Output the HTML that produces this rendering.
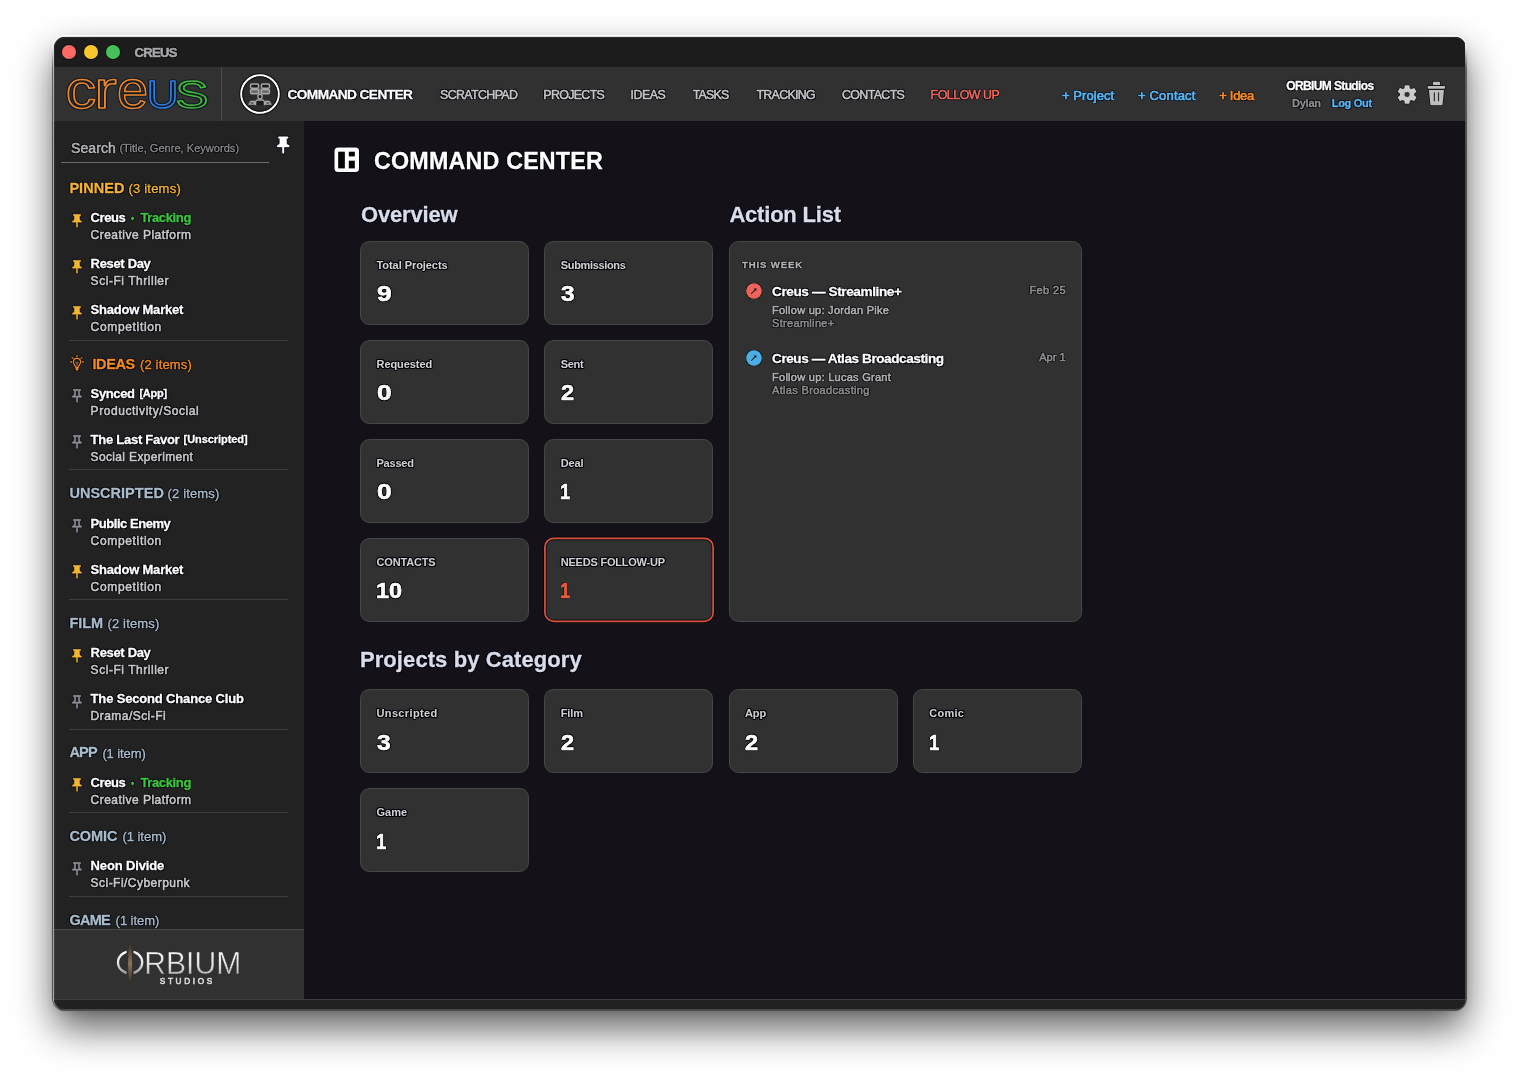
<!DOCTYPE html>
<html lang="en">
<head>
<meta charset="utf-8">
<title>CREUS — Command Center</title>
<style>
html,body{margin:0;padding:0}
body{width:1519px;height:1080px;background:#fff;position:relative;overflow:hidden;font-family:"Liberation Sans",sans-serif}
#win{position:absolute;left:53.5px;top:36.5px;width:1412px;height:973px;border-radius:11px;overflow:hidden;background:#141119;
 box-shadow:0 18px 38px rgba(0,0,0,.64),0 2px 8px rgba(0,0,0,.12)}
#ring{position:absolute;left:52.2px;top:35.2px;width:1414.6px;height:975.6px;border-radius:12.3px;padding:1.3px;box-sizing:border-box;background:linear-gradient(rgba(255,255,255,.96) 0,rgba(255,255,255,.9) 10px,rgba(96,96,96,.95) 34px,rgba(74,74,74,.95) 120px,rgba(74,74,74,.95) 100%);-webkit-mask:linear-gradient(#000 0 0) content-box,linear-gradient(#000 0 0);-webkit-mask-composite:xor;mask-composite:exclude;z-index:2}
#o{position:absolute;left:-53.5px;top:-36.5px;width:1519px;height:1080px;will-change:transform}
#o div,#o svg{position:absolute}
.t{position:absolute;white-space:pre;line-height:1;transform-origin:0 50%;color:#fff;text-shadow:.9px 0 .3px rgba(0,0,10,1),-.9px 0 .3px rgba(0,0,10,1),0 .9px .3px rgba(0,0,10,1),0 -.9px .3px rgba(0,0,10,1),.65px .65px .3px rgba(0,0,10,1),-.65px .65px .3px rgba(0,0,10,1),.65px -.65px .3px rgba(0,0,10,1),-.65px -.65px .3px rgba(0,0,10,1),0 0 2.5px rgba(0,0,10,0.55)}
.t.s2{text-shadow:.9px 0 .3px rgba(0,0,10,0.62),-.9px 0 .3px rgba(0,0,10,0.62),0 .9px .3px rgba(0,0,10,0.62),0 -.9px .3px rgba(0,0,10,0.62),.65px .65px .3px rgba(0,0,10,0.62),-.65px .65px .3px rgba(0,0,10,0.62),.65px -.65px .3px rgba(0,0,10,0.62),-.65px -.65px .3px rgba(0,0,10,0.62),0 0 2.5px rgba(0,0,10,0.3)}
.t.s3{text-shadow:.9px 0 .3px rgba(0,0,10,0.34),-.9px 0 .3px rgba(0,0,10,0.34),0 .9px .3px rgba(0,0,10,0.34),0 -.9px .3px rgba(0,0,10,0.34),.65px .65px .3px rgba(0,0,10,0.34),-.65px .65px .3px rgba(0,0,10,0.34),.65px -.65px .3px rgba(0,0,10,0.34),-.65px -.65px .3px rgba(0,0,10,0.34),0 0 2.5px rgba(0,0,10,0.15)}
#titlebar{left:53px;top:36px;width:1413px;height:30.5px;background:#1c1c1c}
#navbar{left:53px;top:66.5px;width:1413px;height:54.5px;background:#313131}
#sidebar{left:53px;top:121px;width:250.5px;height:808px;background:#222}
#footer{left:53px;top:929px;width:250.5px;height:69.5px;background:#313131;box-sizing:border-box;border-top:1px solid #474747}
#main{left:303.5px;top:121px;width:1163px;height:877.5px;background:#141119}
#statusbar{left:53px;top:998.5px;width:1413px;height:12px;background:#212121;box-sizing:border-box;border-top:1px solid #3e3e3e}
#edge{left:53.5px;top:36.5px;width:1412px;height:973px;border-radius:11px;box-sizing:border-box;border:1px solid rgba(255,255,255,.07);pointer-events:none}
.dot{width:13.6px;height:13.6px;border-radius:50%;top:45px;box-shadow:0 0 0 .7px rgba(0,0,10,.7)}
.hr{left:69px;width:219px;height:1px;background:#3d3d3d}
.card{box-sizing:border-box;width:169px;height:84px;border-radius:9.5px;background:#313131;border:1px solid #474747}
</style>
</head>
<body>
<div id="ring"></div>
<div id="win"><div id="o">

<!-- ======= title bar ======= -->
<div id="titlebar"></div>
<div class="dot" style="left:62.3px;background:#fb6a63"></div>
<div class="dot" style="left:84.3px;background:#f8c62f"></div>
<div class="dot" style="left:106.4px;background:#48c05a"></div>
<span class="t s2 tb" style="left:134.60px;top:46.00px;font-size:13px;font-weight:700;letter-spacing:-0.671px;color:#a8a8a8;-webkit-text-stroke:0.55px #a8a8a8;">CREUS</span>

<!-- ======= nav bar ======= -->
<div id="navbar"></div>
<div style="left:220.5px;top:66.5px;width:1.5px;height:54.5px;background:#4a4a4a"></div>
<svg style="left:64px;top:76px" width="148" height="36" viewBox="0 0 148 36" font-family="Liberation Sans, sans-serif" fill="none" stroke-linejoin="round"><g opacity=".8"><text x="1.7" y="31.7" font-size="52.6" textLength="30.4" lengthAdjust="spacingAndGlyphs" stroke="#0a1420" stroke-width="3.6">c</text><text x="30.2" y="31.7" font-size="52.6" textLength="22.6" lengthAdjust="spacingAndGlyphs" stroke="#0a1420" stroke-width="3.6">r</text><text x="53" y="31.7" font-size="52.6" textLength="31.2" lengthAdjust="spacingAndGlyphs" stroke="#0a1420" stroke-width="3.6">e</text><text x="82.8" y="31.7" font-size="38.2" textLength="31.6" lengthAdjust="spacingAndGlyphs" stroke="#0a1420" stroke-width="3.6">U</text><text x="111.4" y="31.7" font-size="38.2" textLength="32.8" lengthAdjust="spacingAndGlyphs" stroke="#0a1420" stroke-width="3.6">S</text></g><text x="1.7" y="31.7" font-size="52.6" textLength="30.4" lengthAdjust="spacingAndGlyphs" stroke="#f0862a" stroke-width="1.45">c</text><text x="30.2" y="31.7" font-size="52.6" textLength="22.6" lengthAdjust="spacingAndGlyphs" stroke="#f0862a" stroke-width="1.45">r</text><text x="53" y="31.7" font-size="52.6" textLength="31.2" lengthAdjust="spacingAndGlyphs" stroke="#f0862a" stroke-width="1.45">e</text><text x="82.8" y="31.7" font-size="38.2" textLength="31.6" lengthAdjust="spacingAndGlyphs" stroke="#2f7fe6" stroke-width="1.45">U</text><text x="111.4" y="31.7" font-size="38.2" textLength="32.8" lengthAdjust="spacingAndGlyphs" stroke="#3fbe3a" stroke-width="1.45">S</text></svg>
<svg style="left:238.4px;top:72.2px" width="44" height="44" viewBox="0 0 44 44" fill="none"><circle cx="22" cy="22" r="20.2" fill="#2b2b2b" stroke="#0a0a0a" stroke-width="1.2"/><circle cx="22" cy="22" r="18.75" stroke="#fff" stroke-width="2"/><circle cx="22" cy="22" r="17.2" stroke="#0a0a0a" stroke-width="1"/><g stroke="#a8a8a8" stroke-width="1.5" fill="#1c1c1c"><rect x="12.6" y="12" width="8" height="4.2" rx="1.2"/><rect x="23.4" y="12" width="8" height="4.2" rx="1.2"/><rect x="12.6" y="17.4" width="8" height="4.4" rx="1.2" fill="#6a6a6a"/><rect x="23.4" y="17.4" width="8" height="4.4" rx="1.2" fill="#6a6a6a"/><path d="M22 16.2v6" stroke-width="1"/><circle cx="22" cy="24.6" r="2.2" stroke-width="1.3"/><path d="M17.6 33.2v-3a2.2 2.2 0 0 1 2.2-2.2h4.4a2.2 2.2 0 0 1 2.2 2.2v3" stroke-width="1.3"/><path d="M10.6 32.4l2-3.4h4.4v3.4zM33.4 32.4l-2-3.400h-4.400v3.400z" fill="#a8a8a8" stroke-width=".6"/><path d="M12.600 31h3M28.400 31h3" stroke="#1c1c1c" stroke-width=".9"/></g></svg>
<span class="t nav" style="left:287.50px;top:87.65px;font-size:13.7px;font-weight:700;letter-spacing:-0.591px;-webkit-text-stroke:0.3px #fff;">COMMAND CENTER</span>
<span class="t nav" style="left:440.00px;top:88.70px;font-size:12.4px;letter-spacing:-0.620px;color:#c6c6c6;-webkit-text-stroke:0.54px #c6c6c6;">SCRATCHPAD</span>
<span class="t nav" style="left:543.30px;top:88.70px;font-size:12.4px;letter-spacing:-0.647px;color:#c6c6c6;-webkit-text-stroke:0.54px #c6c6c6;">PROJECTS</span>
<span class="t nav" style="left:630.60px;top:88.70px;font-size:12.4px;letter-spacing:-0.480px;color:#c6c6c6;-webkit-text-stroke:0.54px #c6c6c6;">IDEAS</span>
<span class="t nav" style="left:692.70px;top:88.70px;font-size:12.4px;letter-spacing:-0.785px;color:#c6c6c6;-webkit-text-stroke:0.54px #c6c6c6;">TASKS</span>
<span class="t nav" style="left:756.50px;top:88.70px;font-size:12.4px;letter-spacing:-0.698px;color:#c6c6c6;-webkit-text-stroke:0.54px #c6c6c6;">TRACKING</span>
<span class="t nav" style="left:842.00px;top:88.70px;font-size:12.4px;letter-spacing:-0.623px;color:#c6c6c6;-webkit-text-stroke:0.54px #c6c6c6;">CONTACTS</span>
<span class="t s2 nav" style="left:930.60px;top:88.70px;font-size:12.4px;letter-spacing:-0.489px;color:#ee6a5e;-webkit-text-stroke:0.54px #ee6a5e;">FOLLOW UP</span>
<span class="t s2 nav" style="left:1062.00px;top:88.50px;font-size:13px;letter-spacing:0.069px;color:#5cb6f2;-webkit-text-stroke:0.72px #5cb6f2;">+ Project</span>
<span class="t s2 nav" style="left:1138.00px;top:88.50px;font-size:13px;letter-spacing:0.170px;color:#5cb6f2;-webkit-text-stroke:0.72px #5cb6f2;">+ Contact</span>
<span class="t s2 nav" style="left:1219.25px;top:88.50px;font-size:13px;letter-spacing:-0.305px;color:#f28c28;-webkit-text-stroke:0.72px #f28c28;">+ Idea</span>
<span class="t nav" style="left:1286.25px;top:79.84px;font-size:12px;font-weight:700;letter-spacing:-0.621px;-webkit-text-stroke:0.3px #fff;">ORBIUM Studios</span>
<span class="t s2 nav" style="left:1292.00px;top:97.69px;font-size:11px;font-weight:700;letter-spacing:-0.246px;color:#8e8e8e;-webkit-text-stroke:0.3px #8e8e8e;">Dylan</span>
<span class="t s2 nav" style="left:1331.75px;top:97.69px;font-size:11px;font-weight:700;letter-spacing:-0.290px;color:#5cb6f2;-webkit-text-stroke:0.3px #5cb6f2;">Log Out</span>
<svg style="left:1394.9px;top:82.6px" width="24.2" height="23" viewBox="0 0 24 24" preserveAspectRatio="none"><path d="M19.14 12.94c.04-.3.06-.61.06-.94 0-.32-.02-.64-.07-.94l2.03-1.58a.49.49 0 0 0 .12-.61l-1.92-3.32a.488.488 0 0 0-.59-.22l-2.39.96c-.5-.38-1.03-.7-1.62-.94l-.36-2.54a.484.484 0 0 0-.48-.41h-3.84c-.24 0-.43.17-.47.41l-.36 2.54c-.59.24-1.13.57-1.62.94l-2.39-.96c-.22-.08-.47 0-.59.22L2.74 8.87c-.12.21-.08.47.12.61l2.03 1.58c-.05.3-.09.63-.09.94s.02.64.07.94l-2.03 1.58a.49.49 0 0 0-.12.61l1.92 3.32c.12.22.37.29.59.22l2.39-.96c.5.38 1.03.7 1.62.94l.36 2.54c.05.24.24.41.48.41h3.84c.24 0 .44-.17.47-.41l.36-2.54c.59-.24 1.13-.56 1.62-.94l2.39.96c.22.08.47 0 .59-.22l1.92-3.32c.12-.22.07-.47-.12-.61l-2.01-1.58zM12 15.6c-1.98 0-3.6-1.62-3.6-3.6s1.620-3.6 3.6-3.6 3.600 1.620 3.6 3.6-1.620 3.6-3.6 3.6z" fill="#cbcbcb" stroke="#0c0c0c" stroke-width="1.4" paint-order="stroke" stroke-linejoin="round"/><circle cx="12" cy="12" r="3.300" fill="none" stroke="#cbcbcb" stroke-width="1.5"/></svg><svg style="left:1426px;top:80px" width="21" height="27" viewBox="0 0 21 27"><g stroke="#0c0c0c" stroke-width="1.4" stroke-linejoin="round" fill="#bdbdbd" paint-order="stroke"><rect x="6.9" y="1.8" width="7.2" height="3.4" rx="1"/><rect x="1.6" y="6" width="17.6" height="2.8" rx="1.1"/><path d="M2.9 10.1h15.1l-1.45 14.4a.9.9 0 0 1-.9.8H5.25a.9.9 0 0 1-.9-.8z"/></g><rect x="7.8" y="12.4" width="1.15" height="8.8" fill="#2a2a2a"/><rect x="11.95" y="12.4" width="1.15" height="8.8" fill="#2a2a2a"/></svg>

<!-- ======= sidebar ======= -->
<div id="sidebar"></div>
<div style="left:61.4px;top:162.3px;width:207.4px;height:1.2px;background:#6c6c6c"></div>
<svg class="pin" style="left:273.3px;top:135.2px" width="20.4" height="20.4" viewBox="0 0 24 24"><path d="M16 9V4h1c.55 0 1-.45 1-1s-.45-1-1-1H7c-.55 0-1 .45-1 1s.45 1 1 1h1v5c0 1.66-1.34 3-3 3v2h5.97v7l1 1 1-1v-7H19v-2c-1.66 0-3-1.34-3-3z" fill="#05051a" stroke="#05051a" stroke-width="2.6" stroke-linejoin="round"/><path d="M16 9V4h1c.55 0 1-.45 1-1s-.45-1-1-1H7c-.55 0-1 .45-1 1s.45 1 1 1h1v5c0 1.66-1.34 3-3 3v2h5.97v7l1 1 1-1v-7H19v-2c-1.66 0-3-1.34-3-3z" fill="#fff" stroke="#fff" stroke-width="0.5" stroke-linejoin="round"/></svg>
<svg class="pin" style="left:69px;top:212.7px" width="16" height="16" viewBox="0 0 24 24"><path d="M16 9V4h1c.55 0 1-.45 1-1s-.45-1-1-1H7c-.55 0-1 .45-1 1s.45 1 1 1h1v5c0 1.66-1.34 3-3 3v2h5.97v7l1 1 1-1v-7H19v-2c-1.66 0-3-1.34-3-3z" fill="#05051a" stroke="#05051a" stroke-width="2.6" stroke-linejoin="round"/><path d="M16 9V4h1c.55 0 1-.45 1-1s-.45-1-1-1H7c-.55 0-1 .45-1 1s.45 1 1 1h1v5c0 1.66-1.34 3-3 3v2h5.97v7l1 1 1-1v-7H19v-2c-1.66 0-3-1.34-3-3z" fill="#f2b432" stroke="#f2b432" stroke-width="0.5" stroke-linejoin="round"/></svg>
<svg class="pin" style="left:69px;top:258.7px" width="16" height="16" viewBox="0 0 24 24"><path d="M16 9V4h1c.55 0 1-.45 1-1s-.45-1-1-1H7c-.55 0-1 .45-1 1s.45 1 1 1h1v5c0 1.66-1.34 3-3 3v2h5.97v7l1 1 1-1v-7H19v-2c-1.66 0-3-1.34-3-3z" fill="#05051a" stroke="#05051a" stroke-width="2.6" stroke-linejoin="round"/><path d="M16 9V4h1c.55 0 1-.45 1-1s-.45-1-1-1H7c-.55 0-1 .45-1 1s.45 1 1 1h1v5c0 1.66-1.34 3-3 3v2h5.97v7l1 1 1-1v-7H19v-2c-1.66 0-3-1.34-3-3z" fill="#f2b432" stroke="#f2b432" stroke-width="0.5" stroke-linejoin="round"/></svg>
<svg class="pin" style="left:69px;top:304.6px" width="16" height="16" viewBox="0 0 24 24"><path d="M16 9V4h1c.55 0 1-.45 1-1s-.45-1-1-1H7c-.55 0-1 .45-1 1s.45 1 1 1h1v5c0 1.66-1.34 3-3 3v2h5.97v7l1 1 1-1v-7H19v-2c-1.66 0-3-1.34-3-3z" fill="#05051a" stroke="#05051a" stroke-width="2.6" stroke-linejoin="round"/><path d="M16 9V4h1c.55 0 1-.45 1-1s-.45-1-1-1H7c-.55 0-1 .45-1 1s.45 1 1 1h1v5c0 1.66-1.34 3-3 3v2h5.97v7l1 1 1-1v-7H19v-2c-1.66 0-3-1.34-3-3z" fill="#f2b432" stroke="#f2b432" stroke-width="0.5" stroke-linejoin="round"/></svg>
<svg class="pin" style="left:69px;top:388.2px" width="16" height="16" viewBox="0 0 24 24"><path d="M14 4v5c0 1.12.37 2.16 1 3H9c.65-.86 1-1.9 1-3V4h4m3-2H7c-.55 0-1 .45-1 1s.45 1 1 1h1v5c0 1.66-1.34 3-3 3v2h5.97v7l1 1 1-1v-7H19v-2c-1.66 0-3-1.34-3-3V4h1c.55 0 1-.45 1-1s-.45-1-1-1z" fill="#05051a" stroke="#05051a" stroke-width="2.6" stroke-linejoin="round"/><path d="M14 4v5c0 1.12.37 2.16 1 3H9c.65-.86 1-1.9 1-3V4h4m3-2H7c-.55 0-1 .45-1 1s.45 1 1 1h1v5c0 1.66-1.34 3-3 3v2h5.97v7l1 1 1-1v-7H19v-2c-1.66 0-3-1.34-3-3V4h1c.55 0 1-.45 1-1s-.45-1-1-1z" fill="#8e8e8e" stroke="#8e8e8e" stroke-width="0.9" stroke-linejoin="round"/></svg>
<svg class="pin" style="left:69px;top:434.2px" width="16" height="16" viewBox="0 0 24 24"><path d="M14 4v5c0 1.12.37 2.16 1 3H9c.65-.86 1-1.9 1-3V4h4m3-2H7c-.55 0-1 .45-1 1s.45 1 1 1h1v5c0 1.66-1.34 3-3 3v2h5.97v7l1 1 1-1v-7H19v-2c-1.66 0-3-1.34-3-3V4h1c.55 0 1-.45 1-1s-.45-1-1-1z" fill="#05051a" stroke="#05051a" stroke-width="2.6" stroke-linejoin="round"/><path d="M14 4v5c0 1.12.37 2.16 1 3H9c.65-.86 1-1.9 1-3V4h4m3-2H7c-.55 0-1 .45-1 1s.45 1 1 1h1v5c0 1.66-1.34 3-3 3v2h5.97v7l1 1 1-1v-7H19v-2c-1.66 0-3-1.34-3-3V4h1c.55 0 1-.45 1-1s-.45-1-1-1z" fill="#8e8e8e" stroke="#8e8e8e" stroke-width="0.9" stroke-linejoin="round"/></svg>
<svg class="pin" style="left:69px;top:518.1px" width="16" height="16" viewBox="0 0 24 24"><path d="M14 4v5c0 1.12.37 2.16 1 3H9c.65-.86 1-1.9 1-3V4h4m3-2H7c-.55 0-1 .45-1 1s.45 1 1 1h1v5c0 1.66-1.34 3-3 3v2h5.97v7l1 1 1-1v-7H19v-2c-1.66 0-3-1.34-3-3V4h1c.55 0 1-.45 1-1s-.45-1-1-1z" fill="#05051a" stroke="#05051a" stroke-width="2.6" stroke-linejoin="round"/><path d="M14 4v5c0 1.12.37 2.16 1 3H9c.65-.86 1-1.9 1-3V4h4m3-2H7c-.55 0-1 .45-1 1s.45 1 1 1h1v5c0 1.66-1.34 3-3 3v2h5.97v7l1 1 1-1v-7H19v-2c-1.66 0-3-1.34-3-3V4h1c.55 0 1-.45 1-1s-.45-1-1-1z" fill="#8e8e8e" stroke="#8e8e8e" stroke-width="0.9" stroke-linejoin="round"/></svg>
<svg class="pin" style="left:69px;top:564.1px" width="16" height="16" viewBox="0 0 24 24"><path d="M16 9V4h1c.55 0 1-.45 1-1s-.45-1-1-1H7c-.55 0-1 .45-1 1s.45 1 1 1h1v5c0 1.66-1.34 3-3 3v2h5.97v7l1 1 1-1v-7H19v-2c-1.66 0-3-1.34-3-3z" fill="#05051a" stroke="#05051a" stroke-width="2.6" stroke-linejoin="round"/><path d="M16 9V4h1c.55 0 1-.45 1-1s-.45-1-1-1H7c-.55 0-1 .45-1 1s.45 1 1 1h1v5c0 1.66-1.34 3-3 3v2h5.97v7l1 1 1-1v-7H19v-2c-1.66 0-3-1.34-3-3z" fill="#f2b432" stroke="#f2b432" stroke-width="0.5" stroke-linejoin="round"/></svg>
<svg class="pin" style="left:69px;top:647.7px" width="16" height="16" viewBox="0 0 24 24"><path d="M16 9V4h1c.55 0 1-.45 1-1s-.45-1-1-1H7c-.55 0-1 .45-1 1s.45 1 1 1h1v5c0 1.66-1.34 3-3 3v2h5.97v7l1 1 1-1v-7H19v-2c-1.66 0-3-1.34-3-3z" fill="#05051a" stroke="#05051a" stroke-width="2.6" stroke-linejoin="round"/><path d="M16 9V4h1c.55 0 1-.45 1-1s-.45-1-1-1H7c-.55 0-1 .45-1 1s.45 1 1 1h1v5c0 1.66-1.34 3-3 3v2h5.97v7l1 1 1-1v-7H19v-2c-1.66 0-3-1.34-3-3z" fill="#f2b432" stroke="#f2b432" stroke-width="0.5" stroke-linejoin="round"/></svg>
<svg class="pin" style="left:69px;top:693.7px" width="16" height="16" viewBox="0 0 24 24"><path d="M14 4v5c0 1.12.37 2.16 1 3H9c.65-.86 1-1.9 1-3V4h4m3-2H7c-.55 0-1 .45-1 1s.45 1 1 1h1v5c0 1.66-1.34 3-3 3v2h5.97v7l1 1 1-1v-7H19v-2c-1.66 0-3-1.34-3-3V4h1c.55 0 1-.45 1-1s-.45-1-1-1z" fill="#05051a" stroke="#05051a" stroke-width="2.6" stroke-linejoin="round"/><path d="M14 4v5c0 1.12.37 2.16 1 3H9c.65-.86 1-1.9 1-3V4h4m3-2H7c-.55 0-1 .45-1 1s.45 1 1 1h1v5c0 1.66-1.34 3-3 3v2h5.97v7l1 1 1-1v-7H19v-2c-1.66 0-3-1.34-3-3V4h1c.55 0 1-.45 1-1s-.45-1-1-1z" fill="#8e8e8e" stroke="#8e8e8e" stroke-width="0.9" stroke-linejoin="round"/></svg>
<svg class="pin" style="left:69px;top:777.2px" width="16" height="16" viewBox="0 0 24 24"><path d="M16 9V4h1c.55 0 1-.45 1-1s-.45-1-1-1H7c-.55 0-1 .45-1 1s.45 1 1 1h1v5c0 1.66-1.34 3-3 3v2h5.97v7l1 1 1-1v-7H19v-2c-1.66 0-3-1.34-3-3z" fill="#05051a" stroke="#05051a" stroke-width="2.6" stroke-linejoin="round"/><path d="M16 9V4h1c.55 0 1-.45 1-1s-.45-1-1-1H7c-.55 0-1 .45-1 1s.45 1 1 1h1v5c0 1.66-1.34 3-3 3v2h5.97v7l1 1 1-1v-7H19v-2c-1.66 0-3-1.34-3-3z" fill="#f2b432" stroke="#f2b432" stroke-width="0.5" stroke-linejoin="round"/></svg>
<svg class="pin" style="left:69px;top:860.8px" width="16" height="16" viewBox="0 0 24 24"><path d="M14 4v5c0 1.12.37 2.16 1 3H9c.65-.86 1-1.9 1-3V4h4m3-2H7c-.55 0-1 .45-1 1s.45 1 1 1h1v5c0 1.66-1.34 3-3 3v2h5.97v7l1 1 1-1v-7H19v-2c-1.66 0-3-1.34-3-3V4h1c.55 0 1-.45 1-1s-.45-1-1-1z" fill="#05051a" stroke="#05051a" stroke-width="2.6" stroke-linejoin="round"/><path d="M14 4v5c0 1.12.37 2.16 1 3H9c.65-.86 1-1.9 1-3V4h4m3-2H7c-.55 0-1 .45-1 1s.45 1 1 1h1v5c0 1.66-1.34 3-3 3v2h5.97v7l1 1 1-1v-7H19v-2c-1.66 0-3-1.34-3-3V4h1c.55 0 1-.45 1-1s-.45-1-1-1z" fill="#8e8e8e" stroke="#8e8e8e" stroke-width="0.9" stroke-linejoin="round"/></svg>
<svg style="left:68.7px;top:354.2px" width="16" height="18" viewBox="0 0 16 18" fill="none" stroke="#f28a22" stroke-width="1.15" stroke-linecap="round"><g stroke="#05051a" stroke-width="2.6" opacity=".9"><path d="M8 1.3v1.5M1.3 7.9h1.6M13.1 7.9h1.6M2.9 3.3l1.2 1.1M13.1 3.3l-1.2 1.1"/><circle cx="8" cy="7.9" r="3.5"/><path d="M6.7 12.6h2.6v3.2H6.7z" fill="#05051a"/></g><path d="M8 1.3v1.5M1.3 7.9h1.6M13.1 7.9h1.6M2.9 3.3l1.2 1.1M13.1 3.3l-1.2 1.1"/><path d="M6.6 13.1 C6.6 11.4 4.5 10.6 4.5 7.9 a3.5 3.5 0 0 1 7 0 C11.5 10.6 9.4 11.4 9.4 13.1"/><path d="M6.6 12.9h2.8v2.4a1.4 1.4 0 0 1-2.8 0z" fill="#f28a22" stroke="none"/><path d="M8 9.6v2.8M6.8 8.3L8 9.6l1.2-1.3" stroke-width=".8"/></svg>
<div class="hr" style="top:339.6px"></div>
<div class="hr" style="top:469.2px"></div>
<div class="hr" style="top:599.2px"></div>
<div class="hr" style="top:728.8px"></div>
<div class="hr" style="top:812.3px"></div>
<div class="hr" style="top:895.5px"></div>
<span class="t s2 sb" style="left:71.00px;top:140.75px;font-size:14px;letter-spacing:0.086px;color:#b2b2b2;-webkit-text-stroke:0.57px #b2b2b2;">Search</span>
<span class="t s2 sb" style="left:119.40px;top:143.09px;font-size:11px;letter-spacing:0.038px;color:#8c8c8c;-webkit-text-stroke:0.32px #8c8c8c;">(Title, Genre, Keywords)</span>
<span class="t s2 sb" style="left:69.40px;top:180.73px;font-size:14.5px;font-weight:700;letter-spacing:0.057px;color:#f2b432;-webkit-text-stroke:0.3px #f2b432;">PINNED</span>
<span class="t s2 sb" style="left:128.40px;top:182.00px;font-size:13px;letter-spacing:0.221px;color:#f2b432;-webkit-text-stroke:0.37px #f2b432;">(3 items)</span>
<span class="t sb" style="left:90.60px;top:211.10px;font-size:13px;font-weight:700;letter-spacing:-0.405px;-webkit-text-stroke:0.3px #fff;">Creus</span>
<span class="t s2 sb" style="left:131.00px;top:213.21px;font-size:10.5px;font-weight:700;transform:scaleX(0.875);color:#3fc43f;-webkit-text-stroke:0.3px #3fc43f;">•</span>
<span class="t s2 sb" style="left:140.40px;top:211.10px;font-size:13px;font-weight:700;letter-spacing:-0.361px;color:#3fc43f;-webkit-text-stroke:0.3px #3fc43f;">Tracking</span>
<span class="t sb" style="left:90.60px;top:229.34px;font-size:12px;letter-spacing:0.481px;color:#c8c8c8;-webkit-text-stroke:0.57px #c8c8c8;">Creative Platform</span>
<span class="t sb" style="left:90.60px;top:257.10px;font-size:13px;font-weight:700;letter-spacing:-0.330px;-webkit-text-stroke:0.3px #fff;">Reset Day</span>
<span class="t sb" style="left:90.60px;top:275.34px;font-size:12px;letter-spacing:0.538px;color:#c8c8c8;-webkit-text-stroke:0.57px #c8c8c8;">Sci-Fi Thriller</span>
<span class="t sb" style="left:90.60px;top:303.00px;font-size:13px;font-weight:700;letter-spacing:-0.219px;-webkit-text-stroke:0.3px #fff;">Shadow Market</span>
<span class="t sb" style="left:90.60px;top:321.24px;font-size:12px;letter-spacing:0.664px;color:#c8c8c8;-webkit-text-stroke:0.57px #c8c8c8;">Competition</span>
<span class="t s2 sb" style="left:92.40px;top:356.73px;font-size:14.5px;font-weight:700;letter-spacing:-0.361px;color:#f28a22;-webkit-text-stroke:0.3px #f28a22;">IDEAS</span>
<span class="t s2 sb" style="left:140.00px;top:358.00px;font-size:13px;letter-spacing:0.146px;color:#f28a22;-webkit-text-stroke:0.37px #f28a22;">(2 items)</span>
<span class="t sb" style="left:90.60px;top:386.60px;font-size:13px;font-weight:700;letter-spacing:-0.380px;-webkit-text-stroke:0.3px #fff;">Synced</span>
<span class="t sb" style="left:139.40px;top:388.29px;font-size:11px;font-weight:700;letter-spacing:-0.261px;-webkit-text-stroke:0.3px #fff;">[App]</span>
<span class="t sb" style="left:90.60px;top:404.84px;font-size:12px;letter-spacing:0.557px;color:#c8c8c8;-webkit-text-stroke:0.57px #c8c8c8;">Productivity/Social</span>
<span class="t sb" style="left:90.60px;top:432.60px;font-size:13px;font-weight:700;letter-spacing:-0.262px;-webkit-text-stroke:0.3px #fff;">The Last Favor</span>
<span class="t sb" style="left:183.60px;top:434.29px;font-size:11px;font-weight:700;letter-spacing:-0.065px;-webkit-text-stroke:0.3px #fff;">[Unscripted]</span>
<span class="t sb" style="left:90.60px;top:450.84px;font-size:12px;letter-spacing:0.352px;color:#c8c8c8;-webkit-text-stroke:0.57px #c8c8c8;">Social Experiment</span>
<span class="t s2 sb" style="left:69.40px;top:486.03px;font-size:14.5px;font-weight:700;letter-spacing:0.024px;color:#a9bcc9;-webkit-text-stroke:0.3px #a9bcc9;">UNSCRIPTED</span>
<span class="t s2 sb" style="left:167.60px;top:487.30px;font-size:13px;letter-spacing:0.146px;color:#a9bcc9;-webkit-text-stroke:0.37px #a9bcc9;">(2 items)</span>
<span class="t sb" style="left:90.60px;top:516.50px;font-size:13px;font-weight:700;letter-spacing:-0.456px;-webkit-text-stroke:0.3px #fff;">Public Enemy</span>
<span class="t sb" style="left:90.60px;top:534.74px;font-size:12px;letter-spacing:0.664px;color:#c8c8c8;-webkit-text-stroke:0.57px #c8c8c8;">Competition</span>
<span class="t sb" style="left:90.60px;top:562.50px;font-size:13px;font-weight:700;letter-spacing:-0.219px;-webkit-text-stroke:0.3px #fff;">Shadow Market</span>
<span class="t sb" style="left:90.60px;top:580.74px;font-size:12px;letter-spacing:0.664px;color:#c8c8c8;-webkit-text-stroke:0.57px #c8c8c8;">Competition</span>
<span class="t s2 sb" style="left:69.40px;top:615.83px;font-size:14.5px;font-weight:700;letter-spacing:-0.048px;color:#a9bcc9;-webkit-text-stroke:0.3px #a9bcc9;">FILM</span>
<span class="t s2 sb" style="left:107.40px;top:617.10px;font-size:13px;letter-spacing:0.171px;color:#a9bcc9;-webkit-text-stroke:0.37px #a9bcc9;">(2 items)</span>
<span class="t sb" style="left:90.60px;top:646.10px;font-size:13px;font-weight:700;letter-spacing:-0.330px;-webkit-text-stroke:0.3px #fff;">Reset Day</span>
<span class="t sb" style="left:90.60px;top:664.34px;font-size:12px;letter-spacing:0.538px;color:#c8c8c8;-webkit-text-stroke:0.57px #c8c8c8;">Sci-Fi Thriller</span>
<span class="t sb" style="left:90.60px;top:692.10px;font-size:13px;font-weight:700;letter-spacing:-0.162px;-webkit-text-stroke:0.3px #fff;">The Second Chance Club</span>
<span class="t sb" style="left:90.60px;top:710.34px;font-size:12px;letter-spacing:0.460px;color:#c8c8c8;-webkit-text-stroke:0.57px #c8c8c8;">Drama/Sci-Fi</span>
<span class="t s2 sb" style="left:69.40px;top:745.43px;font-size:14.5px;font-weight:700;letter-spacing:-0.771px;color:#a9bcc9;-webkit-text-stroke:0.3px #a9bcc9;">APP</span>
<span class="t s2 sb" style="left:102.40px;top:746.70px;font-size:13px;letter-spacing:-0.104px;color:#a9bcc9;-webkit-text-stroke:0.37px #a9bcc9;">(1 item)</span>
<span class="t sb" style="left:90.60px;top:775.60px;font-size:13px;font-weight:700;letter-spacing:-0.405px;-webkit-text-stroke:0.3px #fff;">Creus</span>
<span class="t s2 sb" style="left:131.00px;top:777.71px;font-size:10.5px;font-weight:700;transform:scaleX(0.875);color:#3fc43f;-webkit-text-stroke:0.3px #3fc43f;">•</span>
<span class="t s2 sb" style="left:140.40px;top:775.60px;font-size:13px;font-weight:700;letter-spacing:-0.361px;color:#3fc43f;-webkit-text-stroke:0.3px #3fc43f;">Tracking</span>
<span class="t sb" style="left:90.60px;top:793.84px;font-size:12px;letter-spacing:0.481px;color:#c8c8c8;-webkit-text-stroke:0.57px #c8c8c8;">Creative Platform</span>
<span class="t s2 sb" style="left:69.40px;top:829.03px;font-size:14.5px;font-weight:700;letter-spacing:-0.064px;color:#a9bcc9;-webkit-text-stroke:0.3px #a9bcc9;">COMIC</span>
<span class="t s2 sb" style="left:122.40px;top:830.30px;font-size:13px;letter-spacing:-0.019px;color:#a9bcc9;-webkit-text-stroke:0.37px #a9bcc9;">(1 item)</span>
<span class="t sb" style="left:90.60px;top:859.20px;font-size:13px;font-weight:700;letter-spacing:-0.149px;-webkit-text-stroke:0.3px #fff;">Neon Divide</span>
<span class="t sb" style="left:90.60px;top:877.44px;font-size:12px;letter-spacing:0.465px;color:#c8c8c8;-webkit-text-stroke:0.57px #c8c8c8;">Sci-Fi/Cyberpunk</span>
<span class="t s2 sb" style="left:69.40px;top:912.73px;font-size:14.5px;font-weight:700;letter-spacing:-0.743px;color:#a9bcc9;-webkit-text-stroke:0.3px #a9bcc9;">GAME</span>
<span class="t s2 sb" style="left:115.60px;top:914.00px;font-size:13px;letter-spacing:-0.047px;color:#a9bcc9;-webkit-text-stroke:0.37px #a9bcc9;">(1 item)</span>
<div id="footer"></div>
<svg style="left:110px;top:940px" width="140" height="46" viewBox="0 0 140 46" font-family="Liberation Sans, sans-serif"><defs><linearGradient id="og" x1="0" y1="0" x2="0" y2="1"><stop offset="0" stop-color="#fff"/><stop offset=".55" stop-color="#e4e4e4"/><stop offset="1" stop-color="#9a9a9a"/></linearGradient><linearGradient id="bz" x1="0" y1="0" x2="0" y2="1"><stop offset="0" stop-color="#3a332a"/><stop offset=".5" stop-color="#8a7452"/><stop offset="1" stop-color="#3a332a"/></linearGradient></defs><ellipse cx="20.1" cy="22.4" rx="12.1" ry="11" fill="none" stroke="url(#og)" stroke-width="2.3"/><rect x="16.6" y="8" width="7" height="30" fill="#323232"/><ellipse cx="20.1" cy="23.2" rx="2" ry="19" fill="url(#bz)"/><text x="34.3" y="33.9" font-size="31.8" textLength="97" lengthAdjust="spacingAndGlyphs" fill="url(#og)" stroke="#323232" stroke-width=".5">RBIUM</text></svg>
<span class="t ft" style="left:159.80px;top:978.26px;font-size:8.2px;letter-spacing:2.662px;color:#e0e0e0;-webkit-text-stroke:0.52px #e0e0e0;text-shadow:0 0 1.5px rgba(0,0,0,.5);">STUDIOS</span>

<!-- ======= main ======= -->
<div id="main"></div>
<svg style="left:333px;top:146.3px" width="27.5" height="27.5" viewBox="0 0 27.5 27.5"><rect x=".6" y=".7" width="26.3" height="26.1" rx="4.4" fill="#05050c"/><rect x="1.5" y="1.55" width="24.5" height="24.35" rx="3.5" fill="#fff"/><rect x="5.15" y="5.7" width="6.7" height="16.7" fill="#060609"/><rect x="15.8" y="5.7" width="6.05" height="4.7" fill="#060609"/><rect x="15.8" y="14.7" width="6.05" height="7.7" fill="#060609"/></svg>
<div class="card" style="left:360px;top:240.75px"></div>
<div class="card" style="left:544.25px;top:240.75px"></div>
<div class="card" style="left:360px;top:339.75px"></div>
<div class="card" style="left:544.25px;top:339.75px"></div>
<div class="card" style="left:360px;top:438.75px"></div>
<div class="card" style="left:544.25px;top:438.75px"></div>
<div class="card" style="left:360px;top:537.75px"></div>
<div class="card" style="left:544.25px;top:537.75px;border-color:transparent"></div>
<svg style="left:543px;top:536px" width="172" height="87" viewBox="0 0 172 87"><rect x="1.95" y="2.45" width="168.2" height="82.8" rx="8.6" fill="none" stroke="#04040e" stroke-opacity=".75" stroke-width="3.5"/><rect x="1.95" y="2.45" width="168.2" height="82.8" rx="8.6" fill="none" stroke="#d9513b" stroke-width="1.75"/></svg>
<div class="card" style="left:728.5px;top:240.75px;width:353.5px;height:381px"></div>
<div class="card" style="left:360px;top:689.25px"></div>
<div class="card" style="left:544.25px;top:689.25px"></div>
<div class="card" style="left:728.5px;top:689.25px"></div>
<div class="card" style="left:912.75px;top:689.25px"></div>
<div class="card" style="left:360px;top:788.25px"></div>
<svg style="left:746px;top:282.8px" width="16" height="16" viewBox="0 0 16 16"><circle cx="8" cy="8" r="8.6" fill="#0c1a1e"/><circle cx="8" cy="8" r="7.8" fill="#f0625a"/><path d="M5.4 10.5 L9.8 6.1" stroke="#15181c" stroke-width="1.05" stroke-linecap="round" fill="none"/><path d="M7.6 5.6 H10.3 V8.3 Z" fill="#15181c"/></svg>
<svg style="left:746px;top:349.9px" width="16" height="16" viewBox="0 0 16 16"><circle cx="8" cy="8" r="8.6" fill="#0c1a1e"/><circle cx="8" cy="8" r="7.8" fill="#4daee6"/><path d="M5.4 10.5 L9.8 6.1" stroke="#15181c" stroke-width="1.05" stroke-linecap="round" fill="none"/><path d="M7.6 5.6 H10.3 V8.3 Z" fill="#15181c"/></svg>
<span class="t main" style="left:374.00px;top:149.58px;font-size:23.3px;font-weight:700;letter-spacing:0.180px;-webkit-text-stroke:0.3px #fff;">COMMAND CENTER</span>
<span class="t main" style="left:361.00px;top:204.28px;font-size:22px;font-weight:700;letter-spacing:-0.161px;color:#d9dde9;-webkit-text-stroke:0.3px #d9dde9;">Overview</span>
<span class="t main" style="left:729.40px;top:204.28px;font-size:22px;font-weight:700;letter-spacing:-0.204px;color:#d9dde9;-webkit-text-stroke:0.3px #d9dde9;">Action List</span>
<span class="t main" style="left:359.90px;top:649.38px;font-size:22px;font-weight:700;letter-spacing:0.093px;color:#d9dde9;-webkit-text-stroke:0.3px #d9dde9;">Projects by Category</span>
<span class="t main" style="left:376.50px;top:259.74px;font-size:11px;font-weight:700;letter-spacing:-0.062px;color:#d2d2d2;-webkit-text-stroke:0.05px #d2d2d2;">Total Projects</span>
<span class="t main" style="left:376.70px;top:283.12px;font-size:22.6px;font-weight:700;transform:scaleX(1.167);-webkit-text-stroke:0.65px #fff;">9</span>
<span class="t main" style="left:560.75px;top:259.74px;font-size:11px;font-weight:700;letter-spacing:-0.334px;color:#d2d2d2;-webkit-text-stroke:0.05px #d2d2d2;">Submissions</span>
<span class="t main" style="left:560.95px;top:283.12px;font-size:22.6px;font-weight:700;transform:scaleX(1.083);-webkit-text-stroke:0.65px #fff;">3</span>
<span class="t main" style="left:376.50px;top:358.74px;font-size:11px;font-weight:700;letter-spacing:-0.065px;color:#d2d2d2;-webkit-text-stroke:0.05px #d2d2d2;">Requested</span>
<span class="t main" style="left:376.70px;top:382.12px;font-size:22.6px;font-weight:700;transform:scaleX(1.167);-webkit-text-stroke:0.65px #fff;">0</span>
<span class="t main" style="left:560.75px;top:358.74px;font-size:11px;font-weight:700;letter-spacing:-0.308px;color:#d2d2d2;-webkit-text-stroke:0.05px #d2d2d2;">Sent</span>
<span class="t main" style="left:560.95px;top:382.12px;font-size:22.6px;font-weight:700;transform:scaleX(1.042);-webkit-text-stroke:0.65px #fff;">2</span>
<span class="t main" style="left:376.50px;top:457.74px;font-size:11px;font-weight:700;letter-spacing:-0.212px;color:#d2d2d2;-webkit-text-stroke:0.05px #d2d2d2;">Passed</span>
<span class="t main" style="left:376.70px;top:481.12px;font-size:22.6px;font-weight:700;transform:scaleX(1.167);-webkit-text-stroke:0.65px #fff;">0</span>
<span class="t main" style="left:560.75px;top:457.74px;font-size:11px;font-weight:700;letter-spacing:-0.143px;color:#d2d2d2;-webkit-text-stroke:0.05px #d2d2d2;">Deal</span>
<span class="t main" style="left:560.13px;top:481.12px;font-size:22.6px;font-weight:700;transform:scaleX(0.818);-webkit-text-stroke:0.65px #fff;">1</span>
<span class="t main" style="left:376.50px;top:556.74px;font-size:11px;font-weight:700;letter-spacing:-0.172px;color:#d2d2d2;-webkit-text-stroke:0.05px #d2d2d2;">CONTACTS</span>
<span class="t main" style="left:375.66px;top:580.12px;font-size:22.6px;font-weight:700;transform:scaleX(1.040);-webkit-text-stroke:0.65px #fff;">10</span>
<span class="t main" style="left:560.75px;top:556.74px;font-size:11px;font-weight:700;letter-spacing:-0.214px;color:#d2d2d2;-webkit-text-stroke:0.05px #d2d2d2;">NEEDS FOLLOW-UP</span>
<span class="t s3 main" style="left:560.13px;top:580.12px;font-size:22.6px;font-weight:700;transform:scaleX(0.818);color:#ea5a3c;-webkit-text-stroke:0.65px #ea5a3c;">1</span>
<span class="t main" style="left:376.50px;top:708.24px;font-size:11px;font-weight:700;letter-spacing:0.363px;color:#d2d2d2;-webkit-text-stroke:0.05px #d2d2d2;">Unscripted</span>
<span class="t main" style="left:376.70px;top:731.62px;font-size:22.6px;font-weight:700;transform:scaleX(1.083);-webkit-text-stroke:0.65px #fff;">3</span>
<span class="t main" style="left:560.75px;top:708.24px;font-size:11px;font-weight:700;letter-spacing:-0.111px;color:#d2d2d2;-webkit-text-stroke:0.05px #d2d2d2;">Film</span>
<span class="t main" style="left:560.95px;top:731.62px;font-size:22.6px;font-weight:700;transform:scaleX(1.042);-webkit-text-stroke:0.65px #fff;">2</span>
<span class="t main" style="left:745.00px;top:708.24px;font-size:11px;font-weight:700;letter-spacing:-0.082px;color:#d2d2d2;-webkit-text-stroke:0.05px #d2d2d2;">App</span>
<span class="t main" style="left:745.20px;top:731.62px;font-size:22.6px;font-weight:700;transform:scaleX(1.042);-webkit-text-stroke:0.65px #fff;">2</span>
<span class="t main" style="left:929.25px;top:708.24px;font-size:11px;font-weight:700;letter-spacing:0.250px;color:#d2d2d2;-webkit-text-stroke:0.05px #d2d2d2;">Comic</span>
<span class="t main" style="left:928.63px;top:731.62px;font-size:22.6px;font-weight:700;transform:scaleX(0.818);-webkit-text-stroke:0.65px #fff;">1</span>
<span class="t main" style="left:376.50px;top:807.24px;font-size:11px;font-weight:700;letter-spacing:0.015px;color:#d2d2d2;-webkit-text-stroke:0.05px #d2d2d2;">Game</span>
<span class="t main" style="left:375.88px;top:830.62px;font-size:22.6px;font-weight:700;transform:scaleX(0.818);-webkit-text-stroke:0.65px #fff;">1</span>
<span class="t s2 main" style="left:742.00px;top:259.87px;font-size:9.6px;font-weight:700;letter-spacing:0.854px;color:#b4b4b4;-webkit-text-stroke:0.3px #b4b4b4;">THIS WEEK</span>
<span class="t main" style="left:772.00px;top:284.74px;font-size:13.6px;font-weight:700;letter-spacing:-0.399px;-webkit-text-stroke:0.3px #fff;">Creus — Streamline+</span>
<span class="t s2 main" style="left:1029.50px;top:285.19px;font-size:11px;letter-spacing:0.374px;color:#909090;-webkit-text-stroke:0.57px #909090;">Feb 25</span>
<span class="t s2 main" style="left:772.00px;top:304.94px;font-size:11px;letter-spacing:0.266px;color:#b2b2b2;-webkit-text-stroke:0.57px #b2b2b2;">Follow up: Jordan Pike</span>
<span class="t s2 main" style="left:772.00px;top:318.44px;font-size:11px;letter-spacing:0.317px;color:#8c8c8c;-webkit-text-stroke:0.57px #8c8c8c;">Streamline+</span>
<span class="t main" style="left:772.00px;top:351.74px;font-size:13.6px;font-weight:700;letter-spacing:-0.440px;-webkit-text-stroke:0.3px #fff;">Creus — Atlas Broadcasting</span>
<span class="t s2 main" style="left:1039.25px;top:352.19px;font-size:11px;letter-spacing:0.019px;color:#909090;-webkit-text-stroke:0.57px #909090;">Apr 1</span>
<span class="t s2 main" style="left:772.00px;top:371.94px;font-size:11px;letter-spacing:0.271px;color:#b2b2b2;-webkit-text-stroke:0.57px #b2b2b2;">Follow up: Lucas Grant</span>
<span class="t s2 main" style="left:772.00px;top:385.44px;font-size:11px;letter-spacing:0.332px;color:#8c8c8c;-webkit-text-stroke:0.57px #8c8c8c;">Atlas Broadcasting</span>

<div id="statusbar"></div>
<div id="edge"></div>
</div></div>
</body>
</html>
